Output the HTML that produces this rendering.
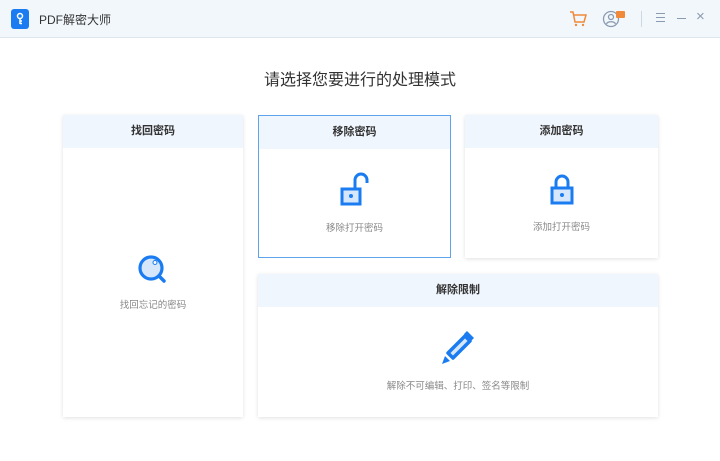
<!DOCTYPE html>
<html><head><meta charset="utf-8"><style>
*{margin:0;padding:0;box-sizing:border-box}
body{width:720px;height:461px;background:#fff;font-family:"Liberation Sans","Noto Sans CJK SC",sans-serif;position:relative;overflow:hidden}
.bar{position:absolute;left:0;top:0;width:720px;height:38px;background:#f2f7fc;border-bottom:1px solid #dde5ee}
.logo{position:absolute;left:11px;top:9px;width:18px;height:20px;background:#1a7cf0;border-radius:3px}
.apptitle{position:absolute;left:39px;top:11px;font-size:12px;color:#333}
h1{position:absolute;top:66px;left:0;width:720px;text-align:center;font-size:16px;font-weight:normal;color:#333}
.card{position:absolute;background:#fff;box-shadow:0 1px 4px rgba(0,0,0,.12)}
.card .hd{height:33px;background:#f0f6fe;text-align:center;line-height:33px;font-size:11px;font-weight:bold;color:#333}
.sel{border:1px solid #5ea3ec;box-shadow:none}
.lbl{position:absolute;left:0;width:100%;text-align:center;font-size:9.5px;color:#888}
svg{position:absolute}
</style></head><body>
<div class="bar">
<div class="logo"><svg width="18" height="20" viewBox="0 0 18 20"><circle cx="9" cy="7" r="2.5" fill="none" stroke="#fff" stroke-width="1.5"/><path d="M9 9.5V15M9 12h2M9 14.5h2" stroke="#fff" stroke-width="1.5"/></svg></div>
<div class="apptitle">PDF解密大师</div>
<svg style="left:569px;top:10px" width="18" height="18" viewBox="0 0 18 18"><path d="M1 2h3l2 10h9l2-7H5" fill="none" stroke="#f08a3a" stroke-width="1.5"/><circle cx="7" cy="15" r="1.2" fill="#f08a3a"/><circle cx="14" cy="15" r="1.2" fill="#f08a3a"/></svg>
<svg style="left:602px;top:9px" width="26" height="20" viewBox="0 0 26 20"><circle cx="9" cy="10" r="7.5" fill="none" stroke="#8a9bb0" stroke-width="1.3"/><circle cx="9" cy="8" r="2.5" fill="none" stroke="#8a9bb0" stroke-width="1.3"/><path d="M4.5 15c1-3 8-3 9 0" fill="none" stroke="#8a9bb0" stroke-width="1.3"/><rect x="14" y="2" width="9" height="7" rx="1" fill="#f08a3a"/></svg>
<div style="position:absolute;left:641px;top:11px;width:1px;height:16px;background:#cfd8e2"></div>
<div style="position:absolute;left:656px;top:13px;width:9px;height:1px;background:#8a9bb0;box-shadow:0 4px 0 #8a9bb0,0 8px 0 #8a9bb0"></div>
<div style="position:absolute;left:677px;top:18px;width:9px;height:1px;background:#8a9bb0"></div>
<div style="position:absolute;left:696px;top:8px;font-size:15px;color:#8a9bb0">×</div>
</div>
<h1>请选择您要进行的处理模式</h1>
<div class="card" style="left:63px;top:115px;width:180px;height:302px"><div class="hd">找回密码</div>
<svg style="left:73px;top:139px" width="34" height="32" viewBox="0 0 34 32"><circle cx="15" cy="14" r="11" fill="#d6e6fb" stroke="#1a7cf0" stroke-width="3.2"/><circle cx="19" cy="8.5" r="2" fill="#fff" stroke="#1a7cf0" stroke-width="1"/><path d="M23 22l5 5" stroke="#1a7cf0" stroke-width="3.5" stroke-linecap="round"/></svg>
<div class="lbl" style="top:182px">找回忘记的密码</div></div>
<div class="card sel" style="left:258px;top:115px;width:193px;height:143px"><div class="hd">移除密码</div>
<svg style="left:80px;top:55px" width="34" height="36" viewBox="0 0 34 36"><path d="M16 18V9a6 6 0 0 1 12 0v3" fill="none" stroke="#1a7cf0" stroke-width="3"/><rect x="3" y="18" width="18" height="15" fill="#d6e6fb" stroke="#1a7cf0" stroke-width="3"/><circle cx="12" cy="25" r="2" fill="#1a7cf0"/></svg>
<div class="lbl" style="top:104px">移除打开密码</div></div>
<div class="card" style="left:465px;top:115px;width:193px;height:143px"><div class="hd">添加密码</div>
<svg style="left:82px;top:55px" width="30" height="36" viewBox="0 0 30 36"><path d="M9 18V12a6 6 0 0 1 12 0v6" fill="none" stroke="#1a7cf0" stroke-width="3"/><rect x="5" y="18" width="20" height="15" fill="#d6e6fb" stroke="#1a7cf0" stroke-width="3"/><circle cx="15" cy="25" r="2" fill="#1a7cf0"/></svg>
<div class="lbl" style="top:104px">添加打开密码</div></div>
<div class="card" style="left:258px;top:274px;width:400px;height:143px"><div class="hd">解除限制</div>
<svg style="left:182px;top:56px" width="36" height="36" viewBox="0 0 36 36"><path d="M8 23L25 6l5 5L13 28z" fill="#d6e6fb" stroke="#1a7cf0" stroke-width="3.5" stroke-linejoin="round"/><path d="M24 4l3-3 7 7-3 3z" fill="#1a7cf0"/><path d="M5 26l5 5-8 3z" fill="#1a7cf0"/></svg>
<div class="lbl" style="top:104px">解除不可编辑、打印、签名等限制</div></div>
</body></html>
